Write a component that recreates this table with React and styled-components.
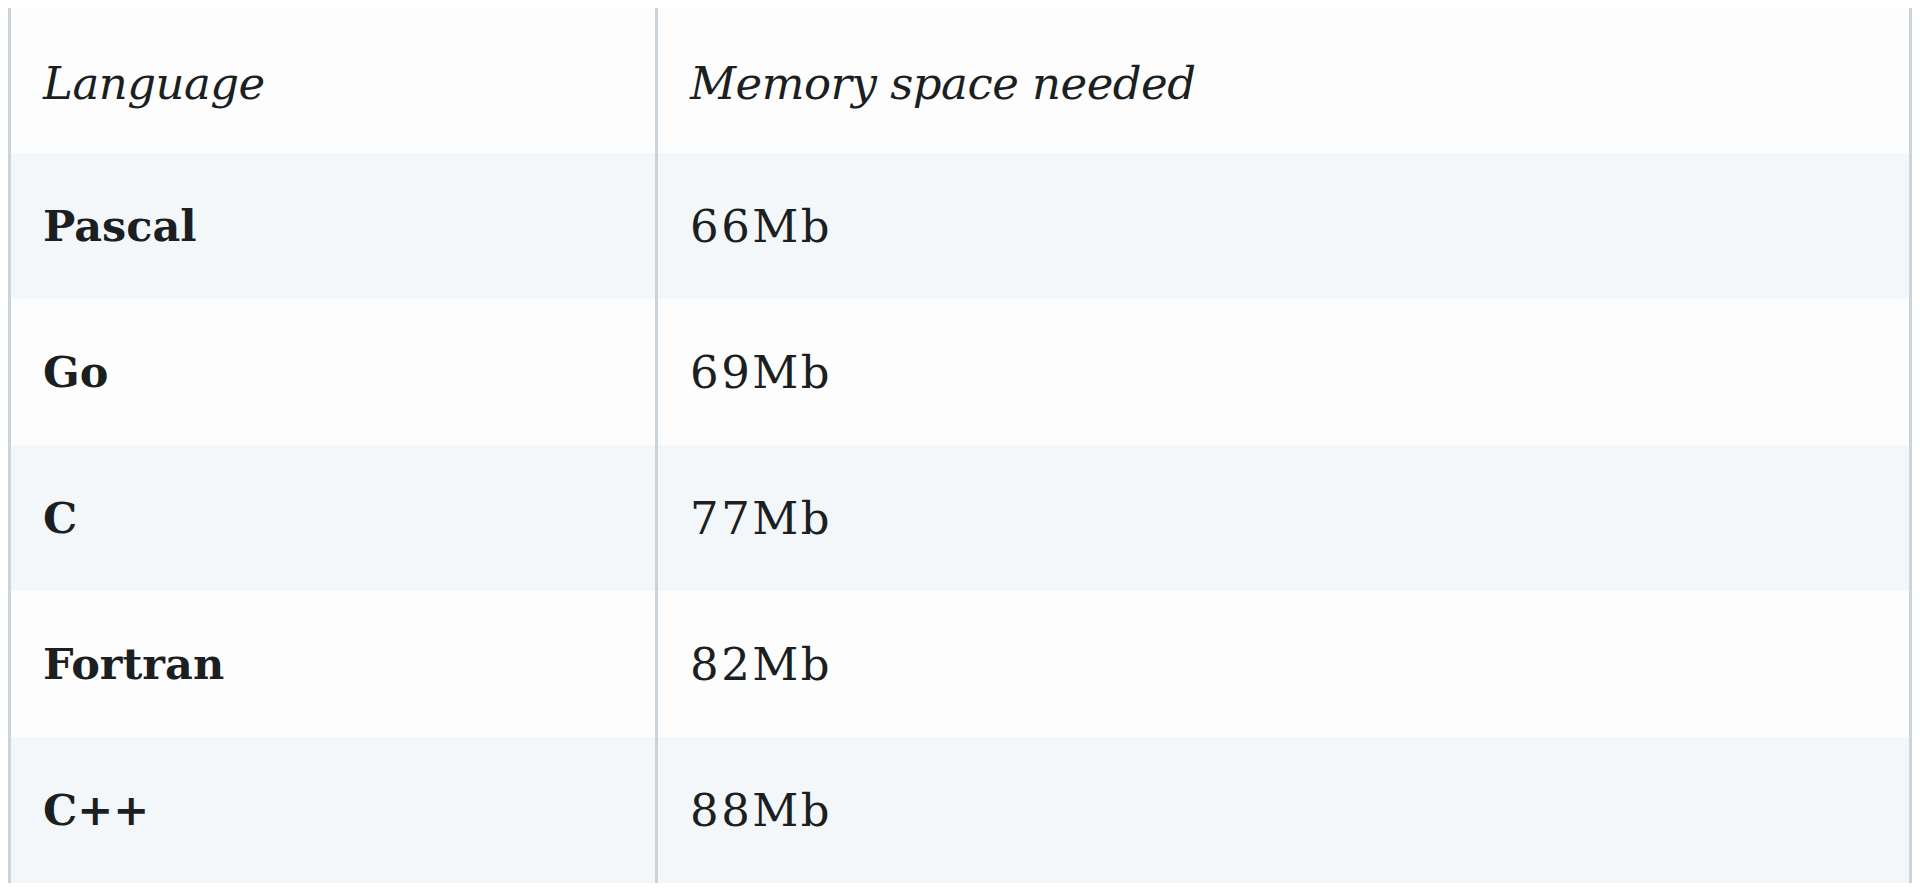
import React from 'react';
import styled, { createGlobalStyle } from 'styled-components';

const GlobalStyle = createGlobalStyle`
  body {
    margin: 8px;
    background: #ffffff;
    font-family: "DejaVu Serif", "Liberation Serif", serif;
    color: #1c1f22;
  }
`;

const Table = styled.table`
  width: 100%;
  border-collapse: collapse;
  border-left: 3px solid #c9d4dc;
  border-right: 3px solid #c9d4dc;
  background: #fdfdfd;
`;

const Row = styled.tr`
  height: ${props => props.$head ? '145px' : '146px'};
  background: ${props => props.$striped ? '#f3f7fa' : '#fdfdfd'};
`;

const HeadCell = styled.th`
  text-align: left;
  font-weight: normal;
  font-style: italic;
  font-size: 45px;
  letter-spacing: -0.5px;
  padding: 6px 32px 0;
  width: ${props => props.$first ? '580px' : 'auto'};
  border-right: ${props => props.$first ? '3px solid #c9d4dc' : 'none'};
`;

const Cell = styled.td`
  font-size: ${props => props.$bold ? '43px' : '45px'};
  font-weight: ${props => props.$bold ? 'bold' : 'normal'};
  letter-spacing: ${props => props.$bold ? '0' : '2.5px'};
  padding: 0 32px;
  border-right: ${props => props.$first ? '3px solid #c9d4dc' : 'none'};
`;

const rows = [
  ['Pascal', '66Mb'],
  ['Go', '69Mb'],
  ['C', '77Mb'],
  ['Fortran', '82Mb'],
  ['C++', '88Mb'],
];

export default function App() {
  return (
    <>
      <GlobalStyle />
      <Table>
        <thead>
          <Row $head>
            <HeadCell $first>Language</HeadCell>
            <HeadCell>Memory space needed</HeadCell>
          </Row>
        </thead>
        <tbody>
          {rows.map((r, i) => (
            <Row key={r[0]} $striped={i % 2 === 0}>
              <Cell $first $bold>{r[0]}</Cell>
              <Cell>{r[1]}</Cell>
            </Row>
          ))}
        </tbody>
      </Table>
    </>
  );
}
